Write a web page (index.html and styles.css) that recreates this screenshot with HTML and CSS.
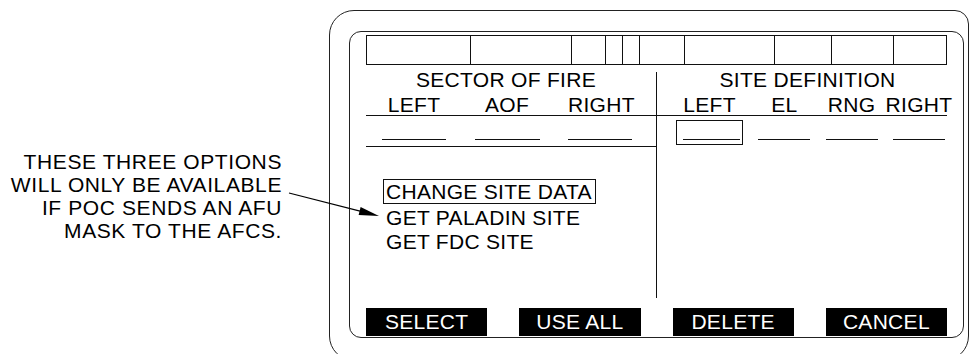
FILE: index.html
```html
<!DOCTYPE html>
<html lang="en">
<head>
    <meta charset="UTF-8">
    <title>Sector of Fire / Site Definition</title>
    <link rel="stylesheet" href="styles.css">
</head>
<body>
    <div class="page">
        <p class="note">
            THESE THREE OPTIONS<br>
            WILL ONLY BE AVAILABLE<br>
            IF POC SENDS AN AFU<br>
            MASK TO THE AFCS.
        </p>

        <div class="device">
            <div class="screen">
                <div class="status-bar">
                    <span></span><span></span><span></span><span></span><span></span>
                    <span></span><span></span><span></span><span></span><span></span>
                </div>

                <div class="panel">
                    <div class="col col-left">
                        <div class="title">SECTOR OF FIRE</div>
                        <div class="labels three">
                            <span>LEFT</span><span>AOF</span><span>RIGHT</span>
                        </div>
                        <div class="fields three">
                            <span class="blank"></span><span class="blank"></span><span class="blank"></span>
                        </div>
                        <ul class="menu">
                            <li class="selected">CHANGE SITE DATA</li>
                            <li>GET PALADIN SITE</li>
                            <li>GET FDC SITE</li>
                        </ul>
                    </div>
                    <div class="col col-right">
                        <div class="title">SITE DEFINITION</div>
                        <div class="labels four">
                            <span>LEFT</span><span>EL</span><span>RNG</span><span>RIGHT</span>
                        </div>
                        <div class="fields four">
                            <span class="cursor"><span class="blank"></span></span>
                            <span class="blank"></span><span class="blank"></span><span class="blank"></span>
                        </div>
                    </div>
                </div>

                <div class="softkeys">
                    <button>SELECT</button>
                    <button>USE ALL</button>
                    <button>DELETE</button>
                    <button>CANCEL</button>
                </div>
            </div>
        </div>

        <svg class="arrow" width="971" height="354" viewBox="0 0 971 354">
            <line x1="289" y1="193" x2="361" y2="211.3" stroke="#000" stroke-width="1.2"/>
            <polygon points="379,216 358.6,214.9 360.6,207.1" fill="#000"/>
        </svg>
    </div>
</body>
</html>
```

FILE: styles.css
```css
html, body {
    margin: 0;
    height: 354px;
    overflow: hidden;
    background: #fff;
}
body {
    font-family: "Liberation Sans", Arial, sans-serif;
    font-size: 21px;
    letter-spacing: 0.3px;
    color: #000;
}
.page {
    position: relative;
    display: flex;
    align-items: flex-start;
}
.note {
    width: 282px;
    margin: 0;
    padding-top: 150px;
    text-align: right;
    line-height: 23px;
    letter-spacing: 0.6px;
}
.arrow {
    position: absolute;
    left: 0;
    top: 0;
    pointer-events: none;
}

/* outer housing */
.device {
    margin: 10px 0 0 47px;
    width: 640px;
    height: 351px;
    box-sizing: border-box;
    border: 1px solid #222;
    border-radius: 25px 14px 25px 25px;
    padding: 20px 0 0 19px;
}
.screen {
    width: 615px;
    box-sizing: border-box;
    border: 1px solid #222;
    border-radius: 12px;
    padding: 3px 16px 1px;
}

/* top status strip */
.status-bar {
    display: grid;
    grid-template-columns: 103px 101px 34px 17px 17px 45px 90px 57px 62px 53px;
    height: 30px;
    box-sizing: border-box;
    border: 1px solid #111;
}
.status-bar span + span {
    border-left: 1px solid #111;
}

.panel {
    display: grid;
    grid-template-columns: 290px 291px;
    height: 226px;
    margin-top: 7px;
}
.col-right {
    border-left: 1px solid #111;
}
.title {
    line-height: 16px;
    text-align: center;
    white-space: nowrap;
}
.col-left .title {
    padding-right: 10px;
}
.col-right .title {
    padding-left: 11px;
}
.labels {
    height: 28px;
    box-sizing: border-box;
    padding-top: 7px;
    line-height: 20px;
    border-bottom: 1px solid #111;
}
.labels span {
    text-align: center;
    white-space: nowrap;
}
.three {
    display: grid;
    grid-template-columns: 64px 65px 64px;
    column-gap: 28.5px;
    padding-left: 16px;
}
.four {
    display: flex;
    justify-content: space-between;
    padding-left: 19px;
    padding-right: 2px;
}
.labels.four span {
    width: 52px;
    display: flex;
    justify-content: center;
}
.labels.four span:first-child {
    width: 67px;
}
.fields {
    height: 31px;
    box-sizing: border-box;
}
.col-left .fields {
    border-bottom: 1px solid #111;
}
.blank {
    display: block;
    height: 23px;
    border-bottom: 1px solid #111;
}
.four .blank {
    width: 52px;
}
.cursor {
    display: block;
    width: 67px;
    height: 25px;
    margin-top: 4px;
    box-sizing: border-box;
    border: 1px solid #111;
    padding: 0 2px 0 6px;
}
.cursor .blank {
    width: auto;
    height: 18px;
}

.menu {
    list-style: none;
    margin: 32px 0 0;
    padding: 0;
}
.menu li {
    line-height: 24px;
    padding-left: 20px;
    margin-top: 0;
}
.menu li:nth-child(2) {
    margin-top: 2px;
}
.menu li.selected {
    display: inline-block;
    margin-left: 17px;
    padding: 1px 3px 0 2px;
    line-height: 22px;
    border: 1px solid #111;
}

/* soft keys */
.softkeys {
    display: grid;
    grid-template-columns: repeat(4, 1fr);
    column-gap: 32px;
    margin-top: 10px;
}
.softkeys button {
    height: 28px;
    padding: 0;
    border: none;
    background: #000;
    color: #fff;
    font: inherit;
    letter-spacing: 0.3px;
    line-height: 28px;
}
```
